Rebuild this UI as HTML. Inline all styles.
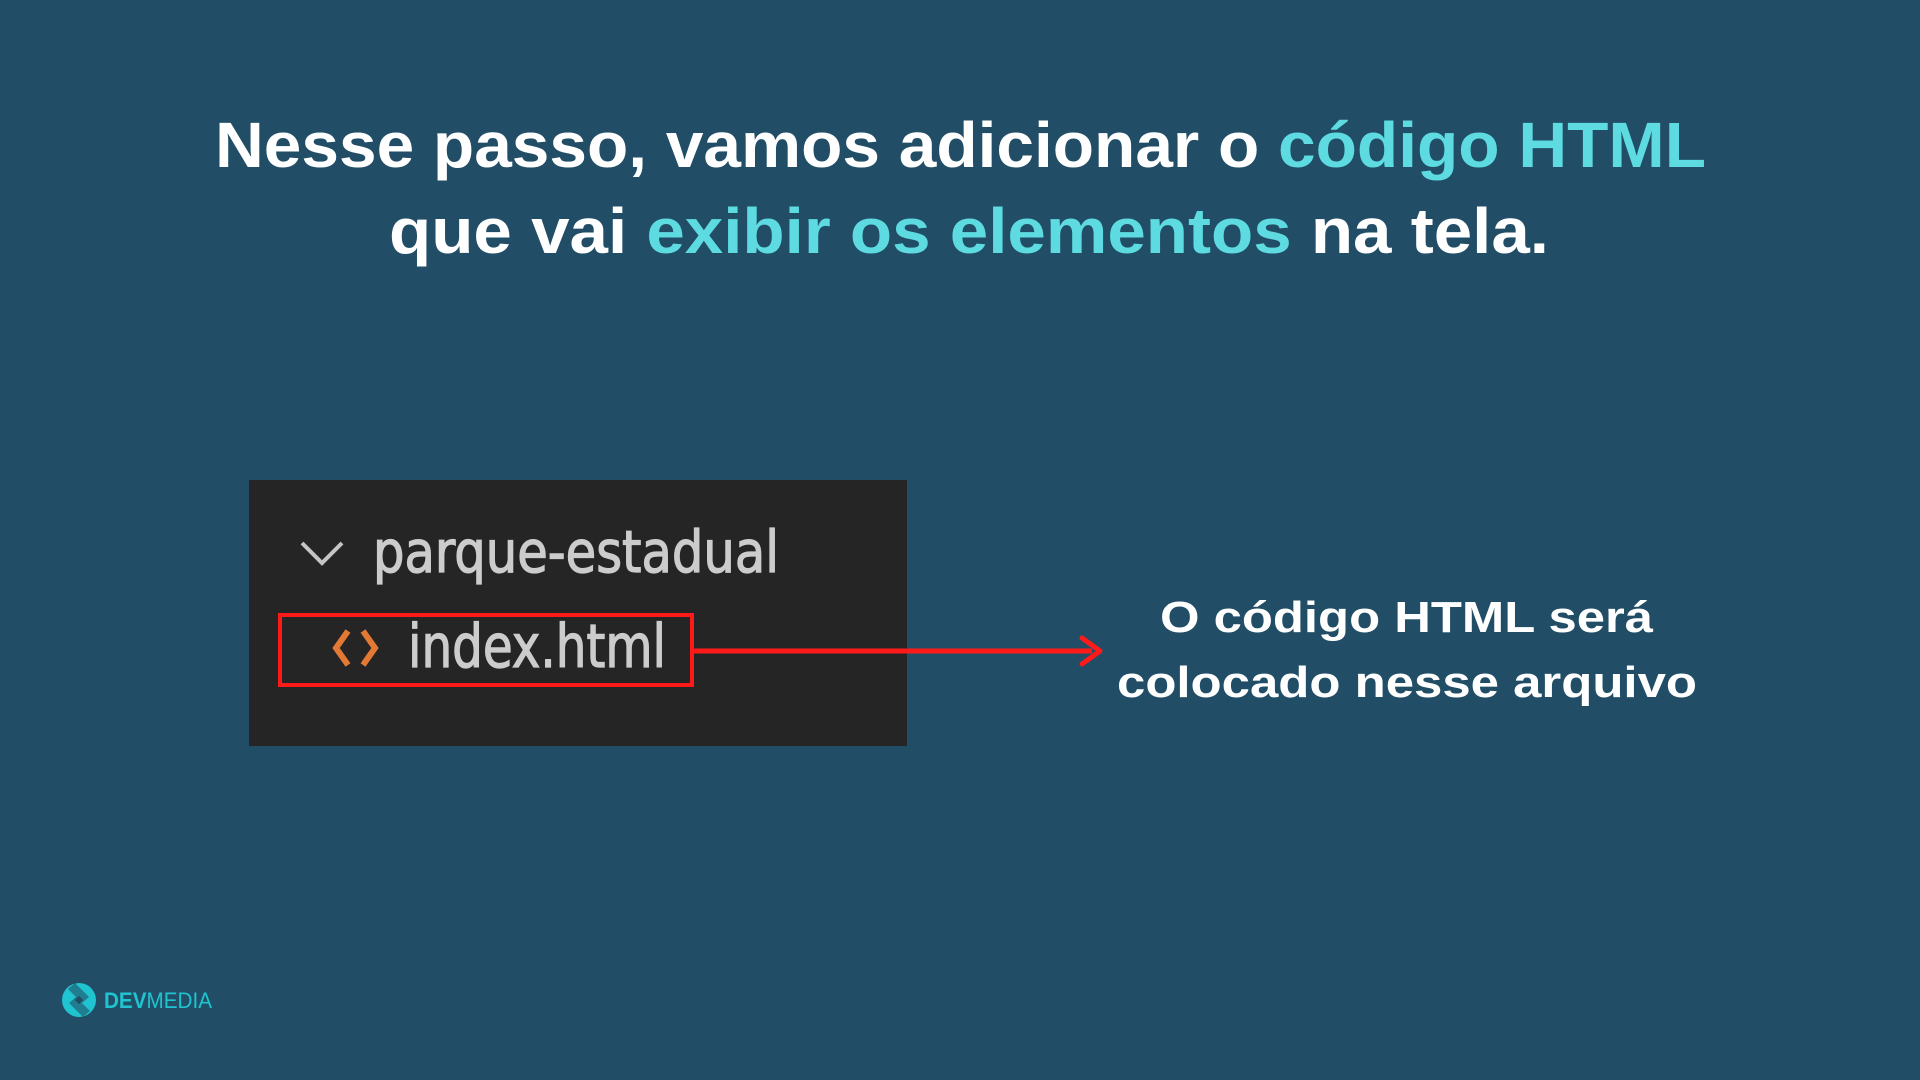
<!DOCTYPE html>
<html><head><meta charset="utf-8"><style>
html,body{margin:0;padding:0;width:1920px;height:1080px;overflow:hidden;background:#214e66;}
svg{display:block}
</style></head><body>
<svg width="1920" height="1080" viewBox="0 0 1920 1080">
<rect width="1920" height="1080" fill="#214e66"/>
<g font-family="Liberation Sans, sans-serif" font-weight="bold" fill="#ffffff">
<text x="215" y="167" font-size="64" textLength="1491" lengthAdjust="spacingAndGlyphs">Nesse passo, vamos adicionar o <tspan fill="#5ddbe0">código HTML</tspan></text>
<text x="389" y="253" font-size="64" textLength="1160" lengthAdjust="spacingAndGlyphs">que vai <tspan fill="#5ddbe0">exibir os elementos</tspan> na tela.</text>
<text x="1160" y="632" font-size="44" textLength="493" lengthAdjust="spacingAndGlyphs">O código HTML será</text>
<text x="1117" y="697" font-size="44" textLength="580" lengthAdjust="spacingAndGlyphs">colocado nesse arquivo</text>
</g>
<rect x="249" y="480" width="658" height="266" fill="#252526"/>
<path d="M302 543 L322 563 L342 543" stroke="#c5c5c5" stroke-width="4" fill="none"/>
<text x="373" y="572" font-family="DejaVu Sans Condensed, Liberation Sans Narrow, sans-serif" font-size="58" fill="#cccccc" stroke="#cccccc" stroke-width="1.2" textLength="406" lengthAdjust="spacingAndGlyphs">parque-estadual</text>
<path d="M348 631 L336 648 L348 665 M363 631 L375 648 L363 665" stroke="#e37933" stroke-width="6" fill="none"/>
<text x="408" y="667" font-family="DejaVu Sans Condensed, Liberation Sans Narrow, sans-serif" font-size="60" fill="#cccccc" stroke="#cccccc" stroke-width="1.2" textLength="258" lengthAdjust="spacingAndGlyphs">index.html</text>
<rect x="280" y="615" width="412" height="70" fill="none" stroke="#ff1a1a" stroke-width="4"/>
<line x1="694" y1="651" x2="1092" y2="651" stroke="#ff1a1a" stroke-width="5"/>
<path d="M1082 638 L1100 651 L1082 664" stroke="#ff1a1a" stroke-width="5" fill="none" stroke-linecap="round" stroke-linejoin="round"/>
<g transform="translate(79,1000)">
<circle r="17" fill="#1fc4d0"/>
<path d="M-4 -17 L10 -3 L3 3 L-11 -11 Z M4 17 L-10 3 L-3 -3 L11 11 Z" fill="#214e66" opacity="0.6"/>
<rect x="-3" y="-3" width="6" height="6" fill="#214e66" transform="rotate(45)"/>
</g>
<text x="104" y="1008" font-family="Liberation Sans, sans-serif" font-size="22" fill="#1fc4d0" textLength="108" lengthAdjust="spacingAndGlyphs"><tspan font-weight="bold">DEV</tspan>MEDIA</text>
</svg>
</body></html>
